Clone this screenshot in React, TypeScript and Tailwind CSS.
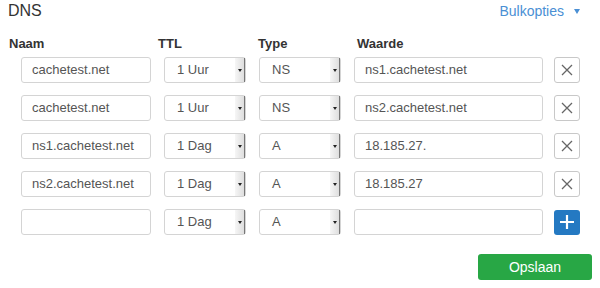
const rows = [
  { naam: 'cachetest.net', ttl: '1 Uur', type: 'NS', waarde: 'ns1.cachetest.net' },
  { naam: 'cachetest.net', ttl: '1 Uur', type: 'NS', waarde: 'ns2.cachetest.net' },
  { naam: 'ns1.cachetest.net', ttl: '1 Dag', type: 'A', waarde: '18.185.27.' },
  { naam: 'ns2.cachetest.net', ttl: '1 Dag', type: 'A', waarde: '18.185.27' },
];

function FakeSelect({ value }: { value: string }) {
  return (
    <div className="flex h-[26px] w-[82px] items-center rounded-[3px] border border-[#d4d4d4] bg-white pl-[12px] text-[13px] text-[#555]">
      <span className="flex-1">{value}</span>
      <div className="flex h-full w-[10px] items-center justify-center border-r-[1.5px] border-[#777] bg-gradient-to-r from-[#f6f6f6] to-[#dedede]">
        <div className="h-0 w-0 border-x-[2.5px] border-t-[3px] border-x-transparent border-t-[#222]" />
      </div>
    </div>
  );
}

function TextBox({ value, width }: { value: string; width: string }) {
  return (
    <div className={`flex h-[26px] ${width} items-center rounded-[3px] border border-[#d4d4d4] bg-white px-[10px] text-[13px] text-[#555]`}>
      {value}
    </div>
  );
}

export default function App() {
  return (
    <div className="h-[288px] w-[600px] bg-white font-['Liberation_Sans',Arial,sans-serif] text-[#333]">
      <div className="flex items-start justify-between pl-[8px] pr-[20px] pt-[1px]">
        <span className="text-[16px] leading-[20px]">DNS</span>
        <div className="flex items-center gap-[10px] text-[14px] leading-[20px] text-[#4a8fd4]">
          <span>Bulkopties</span>
          <div className="h-0 w-0 border-x-[3px] border-t-[5px] border-x-transparent border-t-[#4a8fd4]" />
        </div>
      </div>

      <div className="mt-[14px] flex pl-[9px] text-[13px] font-bold leading-[18px]">
        <span className="w-[149px]">Naam</span>
        <span className="w-[100px]">TTL</span>
        <span className="w-[99px]">Type</span>
        <span>Waarde</span>
      </div>

      <div className="mt-[4px] flex flex-col gap-[12px] pl-[21px]">
        {rows.map((r, i) => (
          <div key={i} className="flex items-center">
            <TextBox value={r.naam} width="w-[130px]" />
            <div className="ml-[13px]"><FakeSelect value={r.ttl} /></div>
            <div className="ml-[13px]"><FakeSelect value={r.type} /></div>
            <div className="ml-[13px]"><TextBox value={r.waarde} width="w-[189px]" /></div>
            <button className="ml-[11px] flex h-[26px] w-[26px] items-center justify-center rounded-[3px] border border-[#c8c8c8] bg-white">
              <svg width="12" height="12" viewBox="0 0 12 12">
                <path d="M1 1L11 11M11 1L1 11" stroke="#666" strokeWidth="1.3" />
              </svg>
            </button>
          </div>
        ))}
        <div className="flex items-center">
          <TextBox value="" width="w-[130px]" />
          <div className="ml-[13px]"><FakeSelect value="1 Dag" /></div>
          <div className="ml-[13px]"><FakeSelect value="A" /></div>
          <div className="ml-[13px]"><TextBox value="" width="w-[189px]" /></div>
          <button className="ml-[11px] flex h-[25px] w-[26px] items-center justify-center rounded-[3px] bg-[#2479c2]">
            <svg width="14" height="14" viewBox="0 0 14 14">
              <path d="M7 0V14M0 7H14" stroke="#fff" strokeWidth="2.2" />
            </svg>
          </button>
        </div>
      </div>

      <div className="mt-[19px] flex justify-end pr-[8px]">
        <button className="h-[26px] w-[114px] rounded-[3px] bg-[#28a745] text-[14px] text-white">Opslaan</button>
      </div>
    </div>
  );
}
